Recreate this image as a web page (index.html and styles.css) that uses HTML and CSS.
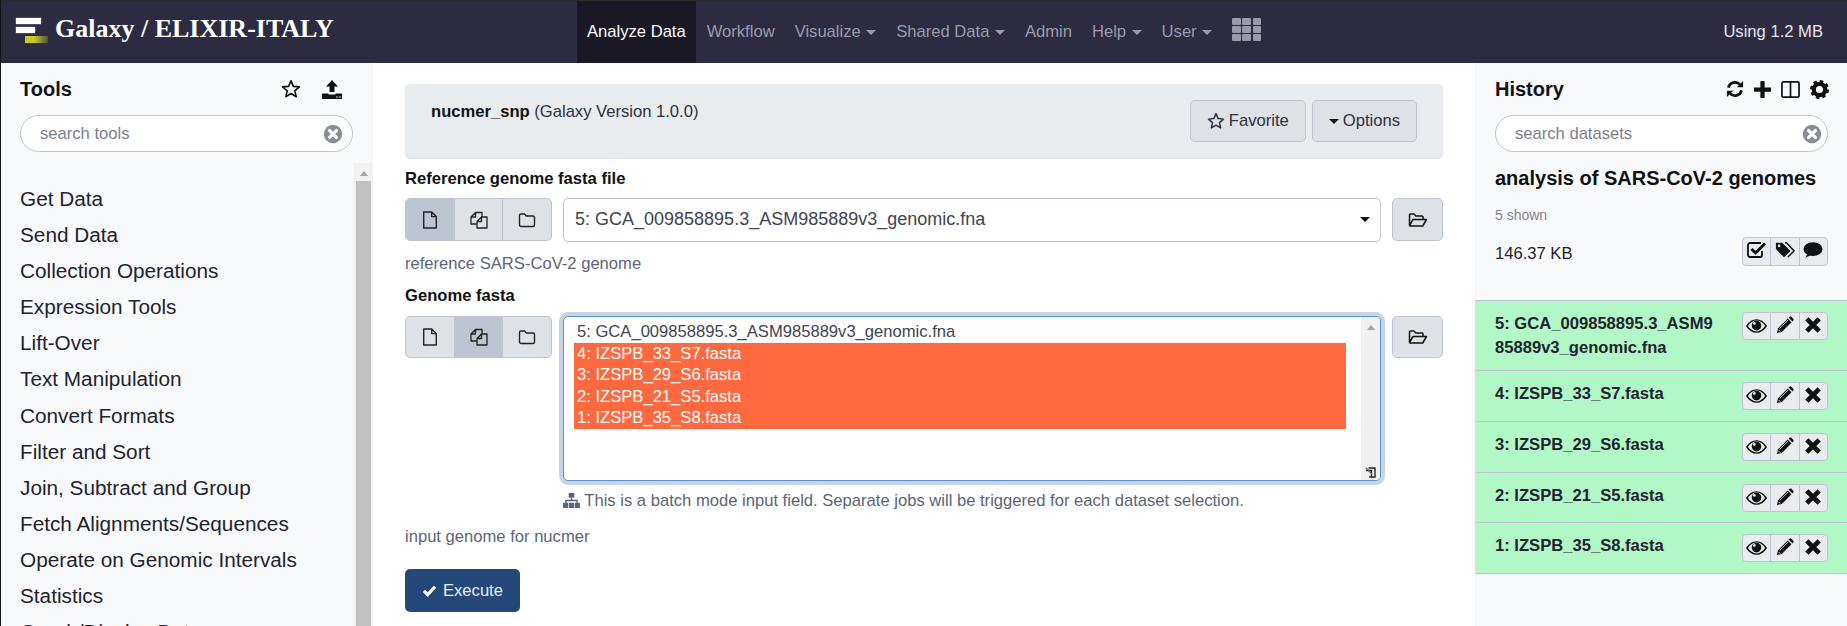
FILE: index.html
```html
<!DOCTYPE html>
<html lang="en">
<head>
<meta charset="utf-8">
<title>Galaxy / ELIXIR-ITALY</title>
<link rel="stylesheet" href="styles.css">
</head>
<body>
<svg class="defs" width="0" height="0" aria-hidden="true">
  <defs>
    <symbol id="i-star" viewBox="0 0 24 24"><path d="M12 2.200l2.900 6.600 7.100.7-5.400 4.700 1.600 7-6.200-3.700-6.200 3.700 1.600-7L2 9.500l7.100-.7z" fill="none" stroke="currentColor" stroke-width="2" stroke-linejoin="round"/></symbol>
    <symbol id="i-x" viewBox="0 0 24 24"><circle cx="12" cy="12" r="10" fill="#868e96"/><path d="M8.300 8.300l7.400 7.400M15.700 8.300l-7.400 7.400" stroke="#fff" stroke-width="3.600" stroke-linecap="round"/></symbol>
    <symbol id="i-file" viewBox="0 0 16 18"><path d="M1.700 1h8l4.600 4.600V17H1.700zM9.700 1v4.600h4.600" fill="none" stroke="currentColor" stroke-width="1.400" stroke-linejoin="round"/></symbol>
    <symbol id="i-files" viewBox="0 0 18 18"><path d="M7 13H1V6l4.500-4.500H12V6M1 6h4.500V1.500" fill="none" stroke="currentColor" stroke-width="1.300" stroke-linejoin="round"/><path d="M7 10.500L11.500 6H17v11H7zM7 10.500h4.500V6" fill="none" stroke="currentColor" stroke-width="1.300" stroke-linejoin="round"/></symbol>
    <symbol id="i-folder" viewBox="0 0 18 16"><path d="M1.500 3.500A1.500 1.500 0 0 1 3 2h3.500l1.800 2H15a1.500 1.500 0 0 1 1.500 1.500V13a1.500 1.500 0 0 1-1.500 1.500H3A1.500 1.500 0 0 1 1.500 13z" fill="none" stroke="currentColor" stroke-width="1.400" stroke-linejoin="round"/></symbol>
    <symbol id="i-open" viewBox="0 0 20 16"><path d="M1.500 13.500V3a1 1 0 0 1 1-1h3.500l1.800 2H14a1 1 0 0 1 1 1v2.500M1.500 13.500L5 7.500h13.500L15 13.500a1 1 0 0 1-1 .5H2.500a1 1 0 0 1-1-.5z" fill="none" stroke="currentColor" stroke-width="1.500" stroke-linejoin="round"/></symbol>
    <symbol id="i-eye" viewBox="0 0 24 16"><path d="M1 8c3-4.500 6.800-7 11-7s8 2.500 11 7c-3 4.500-6.800 7-11 7S4 12.500 1 8z" fill="none" stroke="currentColor" stroke-width="1.700"/><circle cx="12" cy="7.500" r="5.500" fill="currentColor"/><circle cx="9.500" cy="5" r="1.600" fill="#e9ecef"/></symbol>
    <symbol id="i-pencil" viewBox="0 0 20 20"><path d="M1 19l1.300-5.500L13 2.800l4.200 4.200L6.500 17.700z" fill="currentColor"/><path d="M14 1.800l1-1a1.500 1.500 0 0 1 2 0l2.200 2.200a1.500 1.500 0 0 1 0 2l-1 1z" fill="currentColor"/><path d="M4 13.800L13.500 4.500" stroke="#e9ecef" stroke-width=".9"/><path d="M2.700 15.300l2 2" stroke="#e9ecef" stroke-width="1"/></symbol>
    <symbol id="i-times" viewBox="0 0 16 16"><path d="M2.500 2.500l11 11M13.500 2.500l-11 11" stroke="currentColor" stroke-width="4.200"/></symbol>
  </defs>
</svg>
<div class="page">
  <header class="masthead">
    <a class="brand">
      <span class="logo"><span class="bar bar-a"></span><span class="bar bar-b"></span><span class="bar bar-c"></span></span>
      <span class="brand-text">Galaxy / ELIXIR-ITALY</span>
    </a>
    <nav class="nav">
      <a class="nav-item active">Analyze Data</a>
      <a class="nav-item">Workflow</a>
      <a class="nav-item caret">Visualize</a>
      <a class="nav-item caret">Shared Data</a>
      <a class="nav-item">Admin</a>
      <a class="nav-item caret">Help</a>
      <a class="nav-item caret">User</a>
      <a class="nav-item grid-item"><span class="apps"><i></i><i></i><i></i><i></i><i></i><i></i><i></i><i></i><i></i></span></a>
    </nav>
    <div class="quota">Using 1.2 MB</div>
  </header>
  <main class="workspace">
    <aside class="side side-left">
      <div class="side-head">
        <h2 class="side-title">Tools</h2>
        <div class="head-icons tools-icons">
          <svg class="ico ico-20"><use href="#i-star"/></svg>
          <svg class="ico ico-20" viewBox="0 0 20 20"><path d="M10 1l6 6.500h-3.500V13h-5V7.500H4z" fill="currentColor"/><path d="M0 14.500h6.500v1h7v-1H20V20H0z" fill="currentColor"/><circle cx="15" cy="18" r=".8" fill="#f8f9fa"/><circle cx="18" cy="18" r=".8" fill="#f8f9fa"/></svg>
        </div>
      </div>
      <div class="search"><span class="search-text">search tools</span><svg class="search-x"><use href="#i-x"/></svg></div>
      <div class="tools-body">
        <ul class="tool-list">
          <li>Get Data</li>
          <li>Send Data</li>
          <li>Collection Operations</li>
          <li>Expression Tools</li>
          <li>Lift-Over</li>
          <li>Text Manipulation</li>
          <li>Convert Formats</li>
          <li>Filter and Sort</li>
          <li>Join, Subtract and Group</li>
          <li>Fetch Alignments/Sequences</li>
          <li>Operate on Genomic Intervals</li>
          <li>Statistics</li>
          <li>Graph/Display Data</li>
        </ul>
        <div class="scrollbar"><span class="arrow-up"></span><span class="thumb"></span></div>
      </div>
    </aside>

    <section class="center">
      <div class="tool-card">
        <div class="tool-name"><b>nucmer_snp</b> (Galaxy Version 1.0.0)</div>
        <div class="tool-actions">
          <button class="btn"><svg class="ico ico-18"><use href="#i-star"/></svg> Favorite</button>
          <button class="btn"><span class="down"></span> Options</button>
        </div>
      </div>

      <label class="field-label first">Reference genome fasta file</label>
      <div class="field-row">
        <div class="btn-group">
          <span class="seg on"><svg class="seg-ico"><use href="#i-file"/></svg></span>
          <span class="seg"><svg class="seg-ico"><use href="#i-files"/></svg></span>
          <span class="seg"><svg class="seg-ico"><use href="#i-folder"/></svg></span>
        </div>
        <div class="select"><span>5: GCA_009858895.3_ASM985889v3_genomic.fna</span><span class="down dark"></span></div>
        <span class="browse"><svg class="open-ico"><use href="#i-open"/></svg></span>
      </div>
      <p class="help">reference SARS-CoV-2 genome</p>

      <label class="field-label">Genome fasta</label>
      <div class="field-row multi">
        <div class="btn-group short">
          <span class="seg"><svg class="seg-ico"><use href="#i-file"/></svg></span>
          <span class="seg on"><svg class="seg-ico"><use href="#i-files"/></svg></span>
          <span class="seg"><svg class="seg-ico"><use href="#i-folder"/></svg></span>
        </div>
        <div class="multi-col">
          <div class="listbox">
            <div class="options">
              <div class="opt">5: GCA_009858895.3_ASM985889v3_genomic.fna</div>
              <div class="opt sel">4: IZSPB_33_S7.fasta</div>
              <div class="opt sel">3: IZSPB_29_S6.fasta</div>
              <div class="opt sel">2: IZSPB_21_S5.fasta</div>
              <div class="opt sel">1: IZSPB_35_S8.fasta</div>
            </div>
            <div class="list-scroll">
              <span class="arrow-up"></span>
              <svg class="resize" viewBox="0 0 11 11"><path d="M1 3.500h5.500V9M3.500 1h6.500v9h-6" fill="none" stroke="#222" stroke-width="1.400"/><path d="M1 1l6 6" stroke="#666" stroke-width="1.500"/></svg>
            </div>
          </div>
          <p class="batch"><svg class="sitemap" viewBox="0 0 18 16"><rect x="6" y="0" width="6" height="5" fill="currentColor"/><path d="M9 5v3M3 11V8h12v3" fill="none" stroke="currentColor" stroke-width="1.500"/><rect x="0" y="10.500" width="5.500" height="5.500" fill="currentColor"/><rect x="6.250" y="10.500" width="5.500" height="5.500" fill="currentColor"/><rect x="12.500" y="10.500" width="5.500" height="5.500" fill="currentColor"/></svg> This is a batch mode input field. Separate jobs will be triggered for each dataset selection.</p>
        </div>
        <span class="browse short"><svg class="open-ico"><use href="#i-open"/></svg></span>
      </div>
      <p class="help lower">input genome for nucmer</p>

      <button class="execute"><svg class="check" viewBox="0 0 16 14"><path d="M2 7.500l4 4L14 3" fill="none" stroke="#fff" stroke-width="3.400"/></svg> Execute</button>
    </section>

    <aside class="side side-right">
      <div class="side-head">
        <h2 class="side-title">History</h2>
        <div class="head-icons history-icons">
          <svg class="ico ico-18" viewBox="0 0 20 20"><path d="M2.700 8.500A7.500 7.500 0 0 1 15.800 5.500M17.300 11.500A7.500 7.500 0 0 1 4.200 14.500" fill="none" stroke="currentColor" stroke-width="3"/><path d="M19 1v7h-7zM1 19v-7h7z" fill="currentColor"/></svg>
          <svg class="ico ico-17" viewBox="0 0 16 16"><path d="M8 1v14M1 8h14" stroke="currentColor" stroke-width="4" stroke-linecap="round"/></svg>
          <svg class="ico ico-19" viewBox="0 0 20 18"><rect x="1" y="1" width="18" height="16" rx="1.500" fill="none" stroke="currentColor" stroke-width="1.800"/><path d="M10 1v16" stroke="currentColor" stroke-width="1.800"/></svg>
          <svg class="ico ico-19" viewBox="0 0 20 20"><circle cx="10" cy="10" r="6" fill="none" stroke="currentColor" stroke-width="4.500"/><circle cx="10" cy="10" r="8.500" fill="none" stroke="currentColor" stroke-width="3" stroke-dasharray="3.600 3.075"/></svg>
        </div>
      </div>
      <div class="search"><span class="search-text">search datasets</span><svg class="search-x"><use href="#i-x"/></svg></div>
      <h3 class="history-name">analysis of SARS-CoV-2 genomes</h3>
      <div class="shown">5 shown</div>
      <div class="size-row">
        <span class="size">146.37 KB</span>
        <div class="mini-group">
          <span class="mini"><svg class="mini-ico" viewBox="0 0 20 18"><path d="M15 10v4a2 2 0 0 1-2 2H3a2 2 0 0 1-2-2V4a2 2 0 0 1 2-2h11" fill="none" stroke="currentColor" stroke-width="1.800"/><path d="M4.500 8l4 4L18 2.500" fill="none" stroke="currentColor" stroke-width="3"/></svg></span>
          <span class="mini"><svg class="mini-ico" viewBox="0 0 22 18"><path d="M1 1h7l9 9-7 7-9-9z" fill="currentColor"/><circle cx="4.500" cy="4.500" r="1.500" fill="#e9ecef"/><path d="M11 1h1.500l8.500 9-7 7" fill="none" stroke="currentColor" stroke-width="1.600"/></svg></span>
          <span class="mini"><svg class="mini-ico" viewBox="0 0 22 18"><ellipse cx="11" cy="8" rx="10.500" ry="7.500" fill="currentColor"/><path d="M5 13L2.500 17.500 10 14z" fill="currentColor"/></svg></span>
        </div>
      </div>
      <ul class="datasets">
        <li class="dataset tall"><span class="ds-name">5: GCA_009858895.3_ASM985889v3_genomic.fna</span><div class="mini-group"><span class="mini"><svg class="mini-ico eye"><use href="#i-eye"/></svg></span><span class="mini"><svg class="mini-ico"><use href="#i-pencil"/></svg></span><span class="mini"><svg class="mini-ico"><use href="#i-times"/></svg></span></div></li>
        <li class="dataset"><span class="ds-name">4: IZSPB_33_S7.fasta</span><div class="mini-group"><span class="mini"><svg class="mini-ico eye"><use href="#i-eye"/></svg></span><span class="mini"><svg class="mini-ico"><use href="#i-pencil"/></svg></span><span class="mini"><svg class="mini-ico"><use href="#i-times"/></svg></span></div></li>
        <li class="dataset"><span class="ds-name">3: IZSPB_29_S6.fasta</span><div class="mini-group"><span class="mini"><svg class="mini-ico eye"><use href="#i-eye"/></svg></span><span class="mini"><svg class="mini-ico"><use href="#i-pencil"/></svg></span><span class="mini"><svg class="mini-ico"><use href="#i-times"/></svg></span></div></li>
        <li class="dataset"><span class="ds-name">2: IZSPB_21_S5.fasta</span><div class="mini-group"><span class="mini"><svg class="mini-ico eye"><use href="#i-eye"/></svg></span><span class="mini"><svg class="mini-ico"><use href="#i-pencil"/></svg></span><span class="mini"><svg class="mini-ico"><use href="#i-times"/></svg></span></div></li>
        <li class="dataset"><span class="ds-name">1: IZSPB_35_S8.fasta</span><div class="mini-group"><span class="mini"><svg class="mini-ico eye"><use href="#i-eye"/></svg></span><span class="mini"><svg class="mini-ico"><use href="#i-pencil"/></svg></span><span class="mini"><svg class="mini-ico"><use href="#i-times"/></svg></span></div></li>
      </ul>
    </aside>
  </main>
</div>
</body>
</html>
```

FILE: styles.css
```css
* { box-sizing: border-box; }
html, body { margin: 0; height: 100%; overflow: hidden; background: #fff; }
body { font-family: "Liberation Sans", Arial, sans-serif; font-size: 16.6px; color: #2c3143; }
.defs { display: block; height: 0; }
.page { display: flex; flex-direction: column; height: 626px; border-left: 1px solid #16141d; overflow: hidden; }

/* masthead */
.masthead { flex: 0 0 63px; display: flex; align-items: stretch; background: #2c2b42; border-top: 1px solid #2b2b2b; }
.brand { flex: 0 0 576px; display: flex; align-items: flex-start; padding: 16px 0 0 15px; }
.logo { flex: 0 0 39px; display: flex; flex-direction: column; align-items: flex-start; padding-top: 1px; }
.bar { display: block; height: 6px; margin-bottom: 3px; }
.bar-a { width: 25px; background: #fff; box-shadow: 0 0 1px #fff; }
.bar-b { width: 19px; background: #fff; box-shadow: 0 0 1px #fff; }
.bar-c { width: 23px; height: 7px; margin-left: 9px; background: linear-gradient(90deg, #c8cc22 40%, rgba(150,150,60,.35) 100%); }
.brand-text { font-family: "Liberation Serif", "Times New Roman", serif; font-weight: 700; font-size: 26px; line-height: 30px; margin-top: -3px; color: #fff; white-space: nowrap; }
.nav { display: flex; flex: 1; align-items: stretch; }
.nav-item { display: flex; align-items: center; padding: 0 10px; color: #9a9aad; white-space: nowrap; }
.nav-item.active { margin-right: 1px; background: #1a1825; color: #fff; }
.nav-item.caret::after { content: ""; margin-left: 5.500px; border-top: 5px solid #9a9aad; border-left: 5px solid transparent; border-right: 5px solid transparent; }
.grid-item { align-items: flex-start; }
.apps { display: grid; grid-template-columns: repeat(3, 8.400px); grid-auto-rows: 6.500px; gap: 1.700px 1.800px; margin-top: 17px; }
.apps i { background: #9a9aad; border-radius: 1px; }
.quota { display: flex; align-items: center; padding: 0 24px 1px 0; color: #e6e6ea; white-space: nowrap; }

/* panels */
.workspace { flex: 1; display: flex; min-height: 0; }
.side { flex: 0 0 372px; background: #f8f9fa; display: flex; flex-direction: column; min-height: 0; overflow: hidden; }
.side-head { display: flex; justify-content: space-between; align-items: center; height: 26px; margin-top: 13px; }
.side-left .side-head { padding: 0 31px 0 19px; }
.side-right .side-head { padding: 0 18px 0 20px; }
.side-title { margin: 0; font-size: 20px; line-height: 26px; font-weight: 700; color: #111; }
.head-icons { display: flex; align-items: center; color: #111; }
.tools-icons { gap: 21px; }
.history-icons { gap: 10px; }
.ico { display: block; flex: none; }
.ico-20 { width: 20px; height: 20px; }
.ico-19 { width: 19px; height: 19px; }
.ico-18 { width: 18px; height: 18px; }
.ico-17 { width: 17px; height: 17px; }

.search { display: flex; justify-content: space-between; align-items: center; height: 37px; margin: 13px 20px 0 19px; padding: 0 8px 0 19px; background: #fff; border: 1px solid #bfc5d0; border-radius: 19px; }
.side-right .search { margin: 13px 19px 0 20px; padding-right: 4px; }
.search-text { color: #7c8088; }
.search-x { width: 22px; height: 22px; flex: none; }

.tools-body { flex: 1; display: flex; min-height: 0; margin-top: 11px; }
.tool-list { flex: 1; list-style: none; margin: 0; padding: 18px 0 0 19px; overflow: hidden; }
.tool-list li { height: 36.100px; line-height: 36.100px; font-size: 20.750px; color: #1f2330; white-space: nowrap; }
.scrollbar { flex: 0 0 19px; display: flex; flex-direction: column; align-items: center; background: #f1f1f1; }
.arrow-up { display: block; flex: none; margin-top: 8px; border-bottom: 5px solid #a3a3a3; border-left: 4.500px solid transparent; border-right: 4.500px solid transparent; }
.thumb { flex: 1; width: 15px; margin-top: 5px; background: #c1c1c1; }

/* center */
.center { flex: 1; min-width: 0; padding: 21px 32px 0; overflow: hidden; }
.tool-card { display: flex; justify-content: space-between; height: 75px; padding: 16px 26px 0 26px; background: #e9ecef; border-bottom: 1px solid #dee2e6; border-radius: 5px; }
.tool-name { margin-top: 1px; line-height: 22px; color: #2c3143; }
.tool-name b { color: #111; }
.tool-actions { display: flex; gap: 6px; }
.btn { height: 42px; padding: 0 16px; display: flex; align-items: center; gap: 4px; background: #dee2e6; border: 1px solid #bfc5d0; border-radius: 5px; font: inherit; color: #2c3143; }
.down { display: inline-block; border-top: 5px solid #111; border-left: 5px solid transparent; border-right: 5px solid transparent; }
.field-label { display: block; margin-top: 10px; line-height: 22px; font-weight: 700; color: #111; }
.field-label.first { margin-top: 9px; }
.field-row { display: flex; align-items: flex-start; margin-top: 8px; }
.field-row.multi { margin-top: 9px; }
.btn-group { flex: 0 0 147px; display: flex; height: 43px; background: #dee2e6; border: 1px solid #bfc5d0; border-radius: 5px; overflow: hidden; }
.btn-group.short { height: 42px; }
.seg { flex: 1; display: flex; align-items: center; justify-content: center; color: #222; border-right: 1px solid #bfc5d0; }
.seg:last-child { border-right: 0; }
.seg.on { background: #bdc6d0; }
.seg-ico { width: 18px; height: 18px; }
.select { flex: 1; display: flex; justify-content: space-between; align-items: center; height: 44px; margin-left: 11px; padding: 0 10px 2px 11px; background: #fff; border: 1px solid #bfc5d0; border-radius: 5px; font-size: 18px; color: #40454f; min-width: 0; }
.browse { flex: 0 0 51px; display: flex; align-items: center; justify-content: center; height: 43px; margin-left: 11px; background: #dee2e6; border: 1px solid #bfc5d0; border-radius: 5px; color: #111; }
.browse.short { height: 42px; }
.open-ico { width: 20px; height: 16px; }
.help { margin: 11px 0 0; line-height: 22px; color: #5c6576; }
.multi-col { flex: 1; min-width: 0; margin-left: 11px; }
.listbox { display: flex; height: 165px; background: #fff; border: 1px solid #5c8fd0; border-radius: 5px; box-shadow: 0 0 0 4px #c9d4e3; overflow: hidden; }
.options { flex: 1; min-width: 0; padding: 4px 15px 0 10px; }
.opt { height: 21.500px; line-height: 21.500px; padding-left: 3px; color: #40454f; white-space: nowrap; }
.opt.sel { background: #ff6940; color: #fff; }
.list-scroll { flex: 0 0 19px; display: flex; flex-direction: column; justify-content: space-between; align-items: center; background: #f0f0f0; padding-bottom: 2px; }
.resize { width: 11px; height: 11px; display: block; }
.batch { margin: 9px 0 0; line-height: 22px; color: #5c6576; white-space: nowrap; }
.sitemap { display: inline-block; width: 17px; height: 15px; vertical-align: -2px; }
.help.lower { margin-top: 14px; }
.execute { display: flex; align-items: center; gap: 6px; height: 43px; margin-top: 21px; padding: 0 17px; background: #25487a; border: 0; border-radius: 5px; font: inherit; color: #e9ecef; }
.check { width: 15px; height: 13px; }

/* history */
.history-name { margin: 13px 0 0 20px; font-size: 20px; line-height: 26px; font-weight: 700; color: #111; white-space: nowrap; }
.shown { margin: 14px 0 0 20px; font-size: 14px; line-height: 20px; color: #80858d; }
.size-row { display: flex; justify-content: space-between; align-items: flex-start; margin: 12px 19px 0 20px; height: 40px; }
.size { line-height: 26px; margin-top: 4px; color: #1f2330; }
.mini-group { display: flex; flex: none; height: 29px; width: 86px; background: #e9ecef; border: 1px solid #bfc5d0; border-radius: 4px; overflow: hidden; }
.mini { flex: 1; display: flex; align-items: flex-start; justify-content: center; padding-top: 3px; color: #111; border-right: 1px solid #bfc5d0; }
.mini:last-child { border-right: 0; }
.mini-ico { width: 20px; height: 18px; }
.mini-ico.eye { width: 21px; height: 16px; margin-top: 2px; }
.datasets { list-style: none; margin: 23px 0 0; padding: 0; }
.dataset { display: flex; justify-content: space-between; align-items: flex-start; height: 50.800px; padding: 11px 19px 0 20px; background: #b2f7c6; border-top: 1px solid #bfc5d0; }
.dataset.tall { height: 70px; }
.dataset:last-child { height: 51.800px; border-bottom: 1px solid #bfc5d0; }
.ds-name { flex: 0 0 220px; font-weight: 700; line-height: 24px; color: #1f2330; word-break: break-all; }
.dataset .mini-group { height: 28px; }
```
